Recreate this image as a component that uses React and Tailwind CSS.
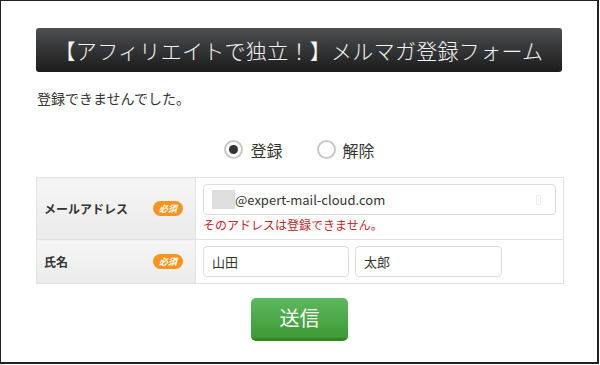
import React from 'react';

const font = { fontFamily: '"Noto Sans CJK JP", "Noto Sans", sans-serif' };

function Badge() {
  return (
    <span className="inline-flex items-center justify-center w-[30px] h-[15px] rounded-full bg-[#f7931e] text-white text-[9px] leading-none italic font-bold">
      必須
    </span>
  );
}

function Radio({ checked, label }) {
  return (
    <label className="flex items-center gap-[7px]">
      <span className="w-[19px] h-[19px] rounded-full border-2 border-[#c8c8c8] bg-white flex items-center justify-center">
        {checked && <span className="w-[9px] h-[9px] rounded-full bg-[#333]" />}
      </span>
      <span className="text-[16px] text-[#333] leading-none">{label}</span>
    </label>
  );
}

export default function App() {
  return (
    <div className="w-[600px] h-[365px] bg-white" style={font}>
      <div className="w-[599px] h-[364px] border border-[#222] border-r-2 border-b-2 box-border">
        <div className="mx-[35px] mt-[27px] h-[44px] rounded-[3px] bg-gradient-to-b from-[#4d4f52] to-[#1c1c1c] flex items-center justify-center">
          <span className="text-[#f4f4f4] text-[21px] leading-none font-light tracking-[0.3px]">【アフィリエイトで独立！】メルマガ登録フォーム</span>
        </div>

        <p className="mx-[36px] mt-[16px] text-[14px] leading-[20px] text-[#333]">登録できませんでした。</p>

        <div className="mt-[32px] flex justify-center gap-[34px] pl-[1px]">
          <Radio checked label="登録" />
          <Radio label="解除" />
        </div>

        <table className="mx-[35px] mt-[18px] w-[528px] border-collapse">
          <tbody>
            <tr className="h-[62px]">
              <th className="w-[159px] border border-[#e2e2e2] bg-gradient-to-b from-[#f5f5f5] to-[#ebebeb] pl-[7px] pr-[12px] text-left align-middle">
                <div className="flex items-center justify-between">
                  <span className="text-[12px] font-bold text-[#333]">メールアドレス</span>
                  <Badge />
                </div>
              </th>
              <td className="border border-[#e2e2e2] px-[7px] pt-[6px] pb-[3px] align-top">
                <div className="h-[31px] w-[353px] border border-[#dcdcdc] rounded-[4px] flex items-center pl-[8px] pr-[14px]">
                  <span className="w-[23px] h-[19px] bg-[#dedede]" />
                  <span className="text-[13px] text-[#333] leading-none">@expert-mail-cloud.com</span>
                  <span className="ml-auto w-[5px] h-[10px] border border-[#ececec] rounded-[1px]" />
                </div>
                <div className="mt-[2px] text-[12px] leading-[16px] text-[#c0272d]">そのアドレスは登録できません。</div>
              </td>
            </tr>
            <tr className="h-[44px]">
              <th className="border border-[#e2e2e2] bg-gradient-to-b from-[#f5f5f5] to-[#ebebeb] pl-[7px] pr-[12px] text-left align-middle">
                <div className="flex items-center justify-between">
                  <span className="text-[12px] font-bold text-[#333]">氏名</span>
                  <Badge />
                </div>
              </th>
              <td className="border border-[#e2e2e2] px-[7px] align-middle">
                <div className="flex gap-[6px]">
                  <div className="h-[31px] w-[146px] border border-[#dcdcdc] rounded-[4px] flex items-center pl-[8px] text-[13px] text-[#333]">山田</div>
                  <div className="h-[31px] w-[147px] border border-[#dcdcdc] rounded-[4px] flex items-center pl-[8px] text-[13px] text-[#333]">太郎</div>
                </div>
              </td>
            </tr>
          </tbody>
        </table>

        <div className="mt-[14px] flex justify-center pl-[1px]">
          <button className="w-[97px] h-[43px] rounded-[5px] bg-gradient-to-b from-[#5cb85c] to-[#3e9a36] border-b-[3px] border-[#2f8a1c] text-white text-[20px] leading-none">
            送信
          </button>
        </div>
      </div>
    </div>
  );
}
